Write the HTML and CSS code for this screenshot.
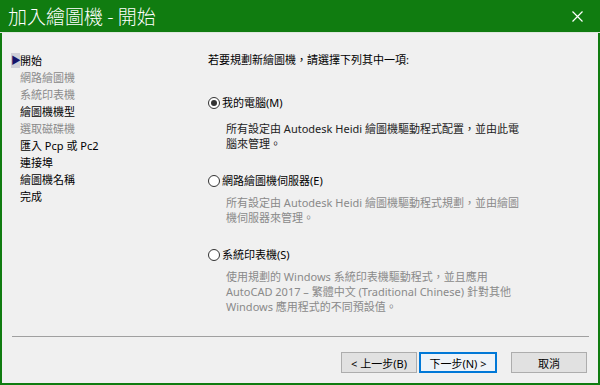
FILE: index.html
```html
<!DOCTYPE HTML>
<html>
<head>
    <meta charset="utf-8" />
    <title>加入繪圖機 - 開始</title>
    <link rel="stylesheet" href="styles.css">
</head>
<body>

<div class="window">
    <div class="titlebar">
        <span class="title">加入繪圖機 - 開始</span>
        <svg class="close" width="11" height="11" viewBox="0 0 11 11">
            <path d="M0.5 0.5 L10.5 10.5 M10.5 0.5 L0.5 10.5" stroke="#fff" stroke-width="1.2" fill="none"/>
        </svg>
    </div>

    <div class="body">
        <ul class="steps">
            <li class="current"><span class="arrow">&#9654;</span>開始</li>
            <li class="off">網路繪圖機</li>
            <li class="off">系統印表機</li>
            <li>繪圖機機型</li>
            <li class="off">選取磁碟機</li>
            <li>匯入 Pcp 或 Pc2</li>
            <li>連接埠</li>
            <li>繪圖機名稱</li>
            <li>完成</li>
        </ul>

        <div class="page">
            <p class="intro">若要規劃新繪圖機，請選擇下列其中一項:</p>

            <div class="option">
                <div class="radio-row"><span class="radio checked"></span>我的電腦(M)</div>
                <p class="desc">所有設定由 Autodesk Heidi 繪圖機驅動程式配置，並由此電<br>腦來管理。</p>
            </div>

            <div class="option">
                <div class="radio-row"><span class="radio"></span>網路繪圖機伺服器(E)</div>
                <p class="desc dim">所有設定由 Autodesk Heidi 繪圖機驅動程式規劃，並由繪圖<br>機伺服器來管理。</p>
            </div>

            <div class="option">
                <div class="radio-row"><span class="radio"></span>系統印表機(S)</div>
                <p class="desc dim">使用規劃的 Windows 系統印表機驅動程式，並且應用<br>AutoCAD 2017 – 繁體中文 (Traditional Chinese) 針對其他<br>Windows 應用程式的不同預設值。</p>
            </div>
        </div>
    </div>

    <div class="footer">
        <button class="btn">&lt; 上一步(B)</button>
        <button class="btn default">下一步(N) &gt;</button>
        <button class="btn cancel">取消</button>
    </div>
</div>

</body>
</html>
```

FILE: styles.css
```css
body, html {
    margin: 0;
    padding: 0;
    width: 100%;
    height: 100%;
    overflow: hidden;
    font-family: "Noto Sans", "Noto Sans CJK TC", sans-serif;
    font-size: 11px;
    color: #000;
}
.window {
    height: 385px;
    box-sizing: border-box;
    display: flex;
    flex-direction: column;
    background-color: #f0f0f0;
    border: 2px solid #107c10;
    border-top: 0;
}
.titlebar {
    height: 32px;
    flex: none;
    display: flex;
    align-items: center;
    justify-content: space-between;
    background-color: #107c10;
    border-bottom: 1px solid #dfe8df;
    margin: 0 -2px;
    padding: 0 17px 0 8px;
}
.title {
    color: #fff;
    font-family: "Noto Sans CJK TC", sans-serif;
    font-weight: 300;
    font-size: 19px;
    line-height: 32px;
}
.close {
    display: block;
}
.body {
    flex: 1;
    display: flex;
}
.steps {
    list-style: none;
    margin: 0;
    padding: 19px 0 0 18px;
    width: 188px;
}
.steps li {
    line-height: 17px;
    height: 17px;
    position: relative;
}
.steps li.off {
    color: #8a8a8a;
}
.steps .arrow {
    position: absolute;
    left: -9px;
    top: 1px;
    width: 9px;
    height: 15px;
    line-height: 15px;
    font-size: 10px;
    color: #15156b;
    background-color: #d0d0d8;
}
.page {
    flex: 1;
    padding-top: 19px;
}
.intro {
    margin: 0 0 28px;
    line-height: 15px;
}
.option {
    margin-bottom: 22px;
}
.radio-row {
    display: flex;
    align-items: center;
    line-height: 15px;
}
.radio {
    width: 12px;
    height: 12px;
    box-sizing: border-box;
    border: 1px solid #333;
    border-radius: 50%;
    background-color: #fff;
    margin-right: 2px;
    display: flex;
    align-items: center;
    justify-content: center;
}
.radio.checked::after {
    content: "";
    width: 6px;
    height: 6px;
    border-radius: 50%;
    background-color: #333;
}
.desc {
    margin: 11px 0 0 18px;
    line-height: 15px;
    color: #222;
}
.desc.dim {
    margin-top: 7px;
    color: #8a8a8a;
}
.footer {
    flex: none;
    display: flex;
    justify-content: flex-end;
    border-top: 1px solid #a0a0a0;
    margin: 0 9px 0 10px;
    padding: 15px 0 10px;
}
.btn {
    width: 76px;
    height: 21px;
    margin: 0;
    padding: 0;
    border: 1px solid #adadad;
    background-color: #e1e1e1;
    font-family: "Noto Sans", "Noto Sans CJK TC", sans-serif;
    font-size: 11px;
    color: #000;
}
.btn.default {
    width: 78px;
    margin-left: 2px;
    border: 2px solid #0078d7;
    background-color: #eef3f8;
}
.btn.cancel {
    margin-left: 14px;
    margin-right: 2px;
}
```
